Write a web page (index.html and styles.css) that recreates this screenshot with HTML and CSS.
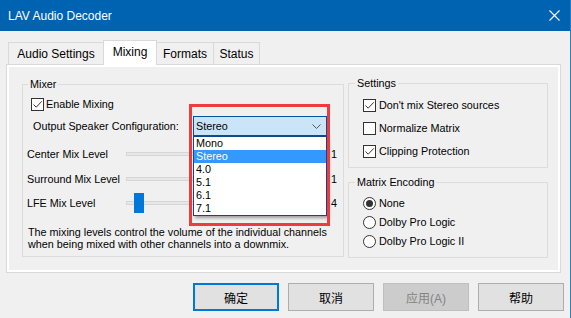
FILE: index.html
```html
<!DOCTYPE html>
<html>
<head>
<meta charset="utf-8">
<link rel="stylesheet" href="styles.css">
</head>
<body>
<div class="window">
  <div class="titlebar">
    <span class="title">LAV Audio Decoder</span>
    <svg class="close" width="11" height="11" viewBox="0 0 11 11"><path d="M0.5 0.5 L10.5 10.5 M10.5 0.5 L0.5 10.5" stroke="#fff" stroke-width="1.1" fill="none"/></svg>
  </div>
  <div class="tabs">
    <div class="tab tab-as">Audio Settings</div>
    <div class="tab tab-mix active">Mixing</div>
    <div class="tab tab-fmt">Formats</div>
    <div class="tab tab-st">Status</div>
  </div>
  <div class="panel">
    <div class="page">
      <fieldset class="group mixer">
        <legend>Mixer</legend>
        <label class="check enable"><span class="box"><svg width="11" height="11" viewBox="0 0 11 11"><path d="M1.5 5.5 L4.2 8.2 L9.8 2.3" stroke="#333" stroke-width="1" fill="none"/></svg></span>Enable Mixing</label>
        <div class="output-row">
          <span class="out-label">Output Speaker Configuration:</span>
          <div class="combo">
            <span class="combo-text">Stereo</span>
            <svg class="chev" width="9" height="5" viewBox="0 0 9 5"><path d="M0.5 0.5 L4.5 4.5 L8.5 0.5" stroke="#555" stroke-width="1" fill="none"/></svg>
            <ul class="droplist">
              <li>Mono</li>
              <li class="sel">Stereo</li>
              <li>4.0</li>
              <li>5.1</li>
              <li>6.1</li>
              <li>7.1</li>
            </ul>
            <div class="annot"></div>
          </div>
        </div>
        <div class="slider-row r1">
          <span class="slabel">Center Mix Level</span>
          <div class="track"></div>
          <span class="val">1</span>
        </div>
        <div class="slider-row r2">
          <span class="slabel">Surround Mix Level</span>
          <div class="track"></div>
          <span class="val">1</span>
        </div>
        <div class="slider-row r3">
          <span class="slabel">LFE Mix Level</span>
          <div class="track"><span class="thumb"></span></div>
          <span class="val">4</span>
        </div>
        <p class="desc">The mixing levels control the volume of the individual channels<br>when being mixed with other channels into a downmix.</p>
      </fieldset>
      <div class="right-col">
        <fieldset class="group settings">
          <legend>Settings</legend>
          <label class="check"><span class="box"><svg width="11" height="11" viewBox="0 0 11 11"><path d="M1.5 5.5 L4.2 8.2 L9.8 2.3" stroke="#333" stroke-width="1" fill="none"/></svg></span>Don't mix Stereo sources</label>
          <label class="check"><span class="box"></span>Normalize Matrix</label>
          <label class="check"><span class="box"><svg width="11" height="11" viewBox="0 0 11 11"><path d="M1.5 5.5 L4.2 8.2 L9.8 2.3" stroke="#333" stroke-width="1" fill="none"/></svg></span>Clipping Protection</label>
        </fieldset>
        <fieldset class="group matrix">
          <legend>Matrix Encoding</legend>
          <label class="radio"><span class="circle on"></span>None</label>
          <label class="radio"><span class="circle"></span>Dolby Pro Logic</label>
          <label class="radio"><span class="circle"></span>Dolby Pro Logic II</label>
        </fieldset>
      </div>
    </div>
  </div>
  <div class="buttons">
    <div class="btn default">确定</div>
    <div class="btn">取消</div>
    <div class="btn disabled">应用(A)</div>
    <div class="btn">帮助</div>
  </div>
</div>
</body>
</html>
```

FILE: styles.css
```css
* { box-sizing: border-box; }
html, body { margin: 0; padding: 0; }
body {
  width: 571px;
  height: 318px;
  overflow: hidden;
  background: #f0f0f0;
  font-family: "Liberation Sans", Arial, sans-serif;
  font-size: 10.8px;
  color: #000;
}
.window {
  width: 571px;
  height: 318px;
  border-right: 1px solid #2b7ac6;
  background: #f0f0f0;
}
.titlebar {
  height: 31px;
  background: #0063b1;
  display: flex;
  align-items: center;
  justify-content: space-between;
  padding: 0 10px 0 8px;
  color: #fff;
}
.title { font-size: 12px; }
.close { display: block; }

.tabs {
  height: 33px;
  display: flex;
  align-items: flex-end;
  padding-left: 8px;
  position: relative;
  z-index: 2;
}
.tab {
  height: 22px;
  border: 1px solid #d9d9d9;
  border-bottom: none;
  background: #f0f0f0;
  font-size: 12px;
  line-height: 22px;
  text-align: center;
  margin-left: -1px;
}
.tab:first-child { margin-left: 0; }
.tab-as { width: 96px; }
.tab-mix { width: 54px; }
.tab-fmt { width: 58px; }
.tab-st { width: 47px; }
.tab.active {
  height: 25px;
  margin-bottom: -1px;
  background: #fff;
  line-height: 23px;
  position: relative;
}

.panel {
  margin-left: 6px;
  width: 555px;
  height: 209px;
  border: 1px solid #d9d9d9;
  background: #fff;
  padding: 2px;
}
.page {
  height: 100%;
  background: #f0f0f0;
  display: flex;
  align-items: flex-start;
  padding: 11px 0 0 13px;
  gap: 4px;
}

.group {
  margin: 0;
  padding: 0;
  border: 1px solid #dcdcdc;
  min-width: 0;
}
.group legend {
  padding: 0 2px;
  margin-left: 6px;
  line-height: 13px;
}
.mixer { width: 322px; height: 179px; }
.mixer legend { margin-left: 5px; }

.check, .radio {
  display: flex;
  align-items: center;
  height: 13px;
  line-height: 13px;
}
.box {
  width: 13px;
  height: 13px;
  border: 1px solid #333;
  background: #fff;
  margin-right: 3px;
  display: flex;
  align-items: center;
  justify-content: center;
  flex: none;
}
.box svg { display: block; }
.enable { margin: 7px 0 0 8px; }
.enable .box { margin-right: 2px; }

.output-row {
  display: flex;
  align-items: center;
  margin: 5px 0 0 10px;
  height: 20px;
}
.out-label { width: 160px; }
.combo {
  position: relative;
  width: 134px;
  height: 20px;
  background: #cce4f7;
  border: 1px solid #005499;
  display: flex;
  align-items: center;
  justify-content: space-between;
  padding: 0 5px 0 2px;
}
.chev { display: block; margin-top: 1px; }
.droplist {
  position: absolute;
  left: -1px;
  top: 19px;
  width: 134px;
  margin: 0;
  padding: 0;
  list-style: none;
  background: #fff;
  border: 1px solid #0b4a8b;
  box-shadow: 2px 2px 3px rgba(0,0,0,0.35);
  z-index: 3;
}
.droplist li {
  height: 13px;
  line-height: 13px;
  padding-left: 2px;
}
.droplist li.sel { background: #3399ff; color: #fff; }
.annot {
  position: absolute;
  left: -5px;
  top: -13px;
  width: 141px;
  height: 122px;
  border: 3px solid #ee3b3e;
  z-index: 4;
}

.slider-row {
  display: flex;
  align-items: center;
  height: 20px;
  margin-left: 4px;
}
.r1 { margin-top: 8px; }
.r2 { margin-top: 5px; }
.r3 { margin-top: 4px; }
.slabel { width: 99px; }
.track {
  position: relative;
  width: 196px;
  height: 4px;
  background: #e7e7e7;
  border: 1px solid #d6d6d6;
}
.thumb {
  position: absolute;
  left: 7px;
  top: -9px;
  width: 10px;
  height: 20px;
  background: #0078d7;
}
.val { margin-left: 9px; }
.desc {
  margin: 13px 0 0 5px;
  line-height: 12px;
}

.right-col {
  display: flex;
  flex-direction: column;
  gap: 8px;
  margin-top: -1px;
}
.settings { width: 200px; height: 91px; }
.settings .check { margin-left: 14px; }
.settings .check:first-of-type { margin-top: 9px; }
.settings .check + .check { margin-top: 10px; }
.matrix { width: 200px; height: 82px; }
.matrix .radio { margin-left: 14px; }
.matrix .radio:first-of-type { margin-top: 8px; }
.matrix .radio + .radio { margin-top: 6px; }
.circle {
  width: 13px;
  height: 13px;
  border: 1px solid #333;
  border-radius: 50%;
  background: #fff;
  margin-right: 3px;
  display: flex;
  align-items: center;
  justify-content: center;
  flex: none;
}
.circle.on::after {
  content: "";
  width: 7px;
  height: 7px;
  border-radius: 50%;
  background: #333;
}

.buttons {
  display: flex;
  gap: 9px;
  padding-left: 193px;
  margin-top: 10px;
}
.btn {
  width: 86px;
  height: 28px;
  background: #e1e1e1;
  border: 1px solid #adadad;
  display: flex;
  align-items: center;
  justify-content: center;
  font-family: "Liberation Sans", "Noto Sans CJK SC", sans-serif;
  font-size: 12px;
}
.btn.default { border: 2px solid #0078d7; }
.btn.disabled { background: #cccccc; border-color: #bfbfbf; color: #838383; }
```
